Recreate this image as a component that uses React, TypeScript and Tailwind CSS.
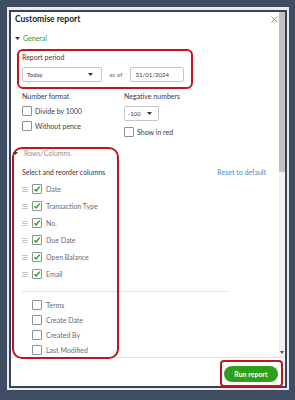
import React from "react";

const font = { fontFamily: "Lato, 'Open Sans', Arial, sans-serif" };

function Caret({ className = "" }: { className?: string }) {
  return (
    <svg width="5" height="3" viewBox="0 0 5 3" className={className}>
      <polygon points="0,0 5,0 2.5,3" fill="#393a3d" />
    </svg>
  );
}

function CheckBox({ checked }: { checked?: boolean }) {
  return (
    <span className="flex h-[10px] w-[10px] shrink-0 items-center justify-center rounded-[1px] border border-[#8d9096] bg-white">
      {checked && (
        <svg width="8" height="8" viewBox="0 0 8 8">
          <path d="M1.4 4.3 L3.1 6 L6.7 1.6" fill="none" stroke="#2ca01c" strokeWidth="1.5" />
        </svg>
      )}
    </span>
  );
}

function Handle() {
  return (
    <svg width="6" height="5" viewBox="0 0 6 5" className="shrink-0">
      <rect x="0" y="0" width="6" height="1" fill="#c4c6c9" />
      <rect x="0" y="2" width="6" height="1" fill="#c4c6c9" />
      <rect x="0" y="4" width="6" height="1" fill="#c4c6c9" />
    </svg>
  );
}

const checkedColumns = ["Date", "Transaction Type", "No.", "Due Date", "Open Balance", "Email"];
const otherColumns = ["Terms", "Create Date", "Created By", "Last Modified"];

export default function App() {
  return (
    <div style={font} className="relative h-[400px] w-[295px] overflow-hidden bg-[#3f4d63] pl-[7px] pt-[7px]">
      <div className="h-[383px] w-[282px] bg-[#e7eaee] pl-[2px] pt-[3px]">
        <div className="flex h-[378px] w-[278px] flex-col border-2 border-[#3a4352] bg-white">
          {/* scrolling body */}
          <div className="flex h-[345px] shrink-0">
            <div className="flex-1 overflow-hidden">
              <div className="flex h-[14px] items-center justify-between pl-[4px] pr-[1px]">
                <span className="text-[8.5px] font-bold text-[#222]">Customise report</span>
                <svg width="7" height="7" viewBox="0 0 7 7">
                  <path d="M0.5 0.5 L6.5 6.5 M6.5 0.5 L0.5 6.5" stroke="#8d9096" strokeWidth="1" />
                </svg>
              </div>

              <div className="mt-[7px] flex h-[11px] items-center gap-[3px] pl-[4px]">
                <Caret />
                <span className="text-[7px] text-[#2ca01c]">General</span>
              </div>

              <div className="ml-[6px] mt-[5px] h-[40px] w-[176px] rounded-[6px] border-2 border-[#c3161c] pl-[3px]">
                <div className="mt-[1px] flex h-[10px] items-center text-[7px] text-[#393a3d]">Report period</div>
                <div className="mt-[5px] flex items-center">
                  <div className="flex h-[15px] w-[80px] items-center justify-between rounded-[2px] border border-[#c4c6c9] pl-[4px] pr-[8px]">
                    <span className="text-[6px] text-[#393a3d]">Today</span>
                    <Caret />
                  </div>
                  <span className="ml-[7px] text-[6.5px] text-[#6b6c72]">as of</span>
                  <div className="ml-[7px] flex h-[15px] w-[54px] items-center rounded-[2px] border border-[#c4c6c9] pl-[5px]">
                    <span className="text-[6px] text-[#393a3d]">31/01/2024</span>
                  </div>
                </div>
              </div>

              <div className="mt-[2px] flex pl-[11px]">
                <div className="w-[102px]">
                  <div className="flex h-[10px] items-center text-[7px] text-[#393a3d]">Number format</div>
                  <div className="mt-[5px] flex h-[10px] items-center gap-[3px]">
                    <CheckBox />
                    <span className="text-[7px] text-[#393a3d]">Divide by 1000</span>
                  </div>
                  <div className="mt-[5px] flex h-[10px] items-center gap-[3px]">
                    <CheckBox />
                    <span className="text-[7px] text-[#393a3d]">Without pence</span>
                  </div>
                </div>
                <div>
                  <div className="flex h-[10px] items-center text-[7px] text-[#393a3d]">Negative numbers</div>
                  <div className="mt-[5px] flex h-[15px] w-[35px] items-center justify-between rounded-[2px] border border-[#c4c6c9] pl-[3px] pr-[6px]">
                    <span className="text-[6px] text-[#393a3d]">-100</span>
                    <Caret />
                  </div>
                  <div className="mt-[6px] flex h-[10px] items-center gap-[3px]">
                    <CheckBox />
                    <span className="text-[7px] text-[#393a3d]">Show in red</span>
                  </div>
                </div>
              </div>

              <div className="mt-[11px] flex h-[10px] items-center gap-[6px] pl-[2px]">
                <Caret />
                <span className="text-[7px] text-[#8d9096]">Rows/Columns</span>
              </div>

              <div className="mt-[9px] flex h-[10px] items-center justify-between pl-[11px] pr-[13px]">
                <span className="text-[7px] text-[#393a3d]">Select and reorder columns</span>
                <span className="text-[7px] text-[#3a8fd6]">Reset to default</span>
              </div>

              <div className="mt-[7px] flex flex-col gap-[7px] pl-[11px]">
                {checkedColumns.map((c) => (
                  <div key={c} className="flex h-[10px] items-center gap-[4px]">
                    <Handle />
                    <CheckBox checked />
                    <span className="text-[7px] text-[#6b6c72]">{c}</span>
                  </div>
                ))}
              </div>

              <div className="ml-[11px] mt-[12px] h-px w-[207px] bg-[#e3e5e8]" />

              <div className="mt-[8px] flex flex-col gap-[5px] pl-[21px]">
                {otherColumns.map((c) => (
                  <div key={c} className="flex h-[10px] items-center gap-[4px]">
                    <CheckBox />
                    <span className="text-[7px] text-[#6b6c72]">{c}</span>
                  </div>
                ))}
              </div>
            </div>

            {/* scrollbar */}
            <div className="flex w-[6px] flex-col bg-[#f1f1f1]">
              <div className="h-[160px] bg-[#c1c1c1]" />
              <div className="flex-1" />
              <div className="mb-[3px] flex justify-center">
                <svg width="4" height="3" viewBox="0 0 4 3">
                  <polygon points="0,0 4,0 2,3" fill="#505050" />
                </svg>
              </div>
            </div>
          </div>

          {/* footer */}
          <div className="flex flex-1 justify-end border-t border-[#dfe1e4] pr-[7px] pt-[8px]">
            <button
              type="button"
              className="flex h-[16px] w-[54px] items-center justify-center rounded-full bg-[#2ca01c] text-[7px] font-bold text-white"
            >
              Run report
            </button>
          </div>
        </div>
      </div>

      {/* annotation outlines */}
      <div className="absolute left-[12px] top-[147px] h-[212px] w-[107px] rounded-[10px] border-2 border-[#c3161c]" />
      <div className="absolute left-[220px] top-[360px] h-[27px] w-[63px] rounded-[4px] border-2 border-[#c3161c]" />
    </div>
  );
}
